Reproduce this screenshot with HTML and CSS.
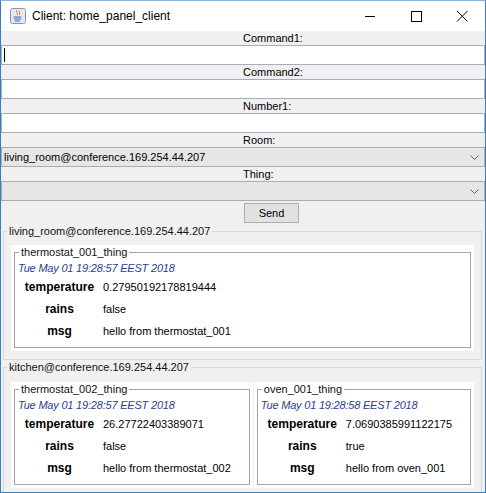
FILE: index.html
```html
<!DOCTYPE html>
<html>
<head>
  <meta charset="UTF-8">
  <link rel="stylesheet" href="styles.css">
  <title>Client: home_panel_client</title>
</head>
<body>
<div class="window">
  <div class="titlebar">
    <svg class="app-icon" width="16" height="16" viewBox="0 0 16 16">
      <rect x="0.5" y="0.5" width="15" height="15" rx="2" fill="#e4e8ee" stroke="#8c96a3"/>
      <path d="M7 2 C5 4 9 5 7 7 M9.5 3 C8 4.5 11 5 9.5 7" fill="none" stroke="#e07a1f" stroke-width="1"/>
      <path d="M3.5 9 H11.5 M4 11 H11 M5 13 H10" stroke="#3a6fb5" stroke-width="1"/>
    </svg>
    <div class="title">Client: home_panel_client</div>
    <div class="controls">
      <div class="ctl"><svg width="12" height="12" viewBox="0 0 12 12"><path d="M1 6.5 H11" stroke="#000"/></svg></div>
      <div class="ctl"><svg width="12" height="12" viewBox="0 0 12 12"><rect x="1.5" y="1.5" width="10" height="10" fill="none" stroke="#000"/></svg></div>
      <div class="ctl"><svg width="12" height="12" viewBox="0 0 12 12"><path d="M1 1 L11.5 11.5 M11.5 1 L1 11.5" stroke="#000"/></svg></div>
    </div>
  </div>

  <div class="content">
    <div class="label">Command1:</div>
    <div class="field"><span class="caret"></span></div>
    <div class="label">Command2:</div>
    <div class="field"></div>
    <div class="label">Number1:</div>
    <div class="field"></div>
    <div class="label">Room:</div>
    <div class="combo">
      <span>living_room@conference.169.254.44.207</span>
      <svg class="arrow" width="9" height="5" viewBox="0 0 9 5"><path d="M0.5 0.5 L4.5 4.5 L8.5 0.5" fill="none" stroke="#606060"/></svg>
    </div>
    <div class="label">Thing:</div>
    <div class="combo">
      <span></span>
      <svg class="arrow" width="9" height="5" viewBox="0 0 9 5"><path d="M0.5 0.5 L4.5 4.5 L8.5 0.5" fill="none" stroke="#606060"/></svg>
    </div>
    <div class="send-row"><button class="send">Send</button></div>

    <fieldset class="room">
      <legend>living_room@conference.169.254.44.207</legend>
      <div class="things">
        <div class="thing-wrap">
          <fieldset class="thing">
            <legend>thermostat_001_thing</legend>
            <div class="date">Tue May 01 19:28:57 EEST 2018</div>
            <div class="props">
              <div class="k">temperature</div><div class="v">0.27950192178819444</div>
              <div class="k">rains</div><div class="v">false</div>
              <div class="k">msg</div><div class="v">hello from thermostat_001</div>
            </div>
          </fieldset>
        </div>
      </div>
    </fieldset>

    <fieldset class="room last">
      <legend>kitchen@conference.169.254.44.207</legend>
      <div class="things">
        <div class="thing-wrap">
          <fieldset class="thing">
            <legend>thermostat_002_thing</legend>
            <div class="date">Tue May 01 19:28:57 EEST 2018</div>
            <div class="props">
              <div class="k">temperature</div><div class="v">26.27722403389071</div>
              <div class="k">rains</div><div class="v">false</div>
              <div class="k">msg</div><div class="v">hello from thermostat_002</div>
            </div>
          </fieldset>
        </div>
        <div class="thing-wrap">
          <fieldset class="thing">
            <legend>oven_001_thing</legend>
            <div class="date">Tue May 01 19:28:58 EEST 2018</div>
            <div class="props">
              <div class="k">temperature</div><div class="v">7.0690385991122175</div>
              <div class="k">rains</div><div class="v">true</div>
              <div class="k">msg</div><div class="v">hello from oven_001</div>
            </div>
          </fieldset>
        </div>
      </div>
    </fieldset>
  </div>
</div>
</body>
</html>
```

FILE: styles.css
```css
html, body {
  margin: 0;
  padding: 0;
}

body {
  font-family: "Liberation Sans", Arial, sans-serif;
  font-size: 11px;
  color: #000;
  background: #fff;
}

.window {
  width: 486px;
  height: 493px;
  box-sizing: border-box;
  border: 1px solid #3b7ec0;
  border-top-color: #8fb4d9;
  background: #f0f0f0;
  display: flex;
  flex-direction: column;
  overflow: hidden;
}

/* title bar */
.titlebar {
  height: 30px;
  background: #fff;
  display: flex;
  align-items: center;
  flex: none;
}
.app-icon {
  margin-left: 9px;
  margin-top: -1px;
}
.title {
  margin-left: 6px;
  font-size: 12px;
  flex: 1;
  margin-top: -1px;
}
.controls {
  display: flex;
  height: 30px;
}
.ctl {
  width: 46px;
  display: flex;
  align-items: center;
  justify-content: center;
}
.ctl svg {
  margin-top: -1px;
}

/* form part */
.content {
  flex: 1;
  display: flex;
  flex-direction: column;
}
.label {
  height: 14px;
  line-height: 14px;
  padding-left: 50%;
  white-space: nowrap;
}
.field {
  height: 20px;
  box-sizing: border-box;
  background: #fff;
  border: 1px solid #a3afbd;
  position: relative;
}
.caret {
  position: absolute;
  left: 2px;
  top: 2px;
  width: 1px;
  height: 14px;
  background: #000;
}
.combo {
  height: 20px;
  box-sizing: border-box;
  background: #e6e6e6;
  border: 1px solid #adadad;
  display: flex;
  align-items: center;
  padding-left: 2px;
}
.combo span {
  flex: 1;
  margin-top: -1px;
}
.combo .arrow {
  margin-right: 5px;
}
.send-row {
  height: 23px;
  padding-left: 50%;
  padding-top: 2px;
  box-sizing: border-box;
}
.send {
  margin-left: 1px;
  width: 55px;
  height: 20px;
  padding: 0;
  font-family: "Liberation Sans", Arial, sans-serif;
  font-size: 11px;
  background: #e1e1e1;
  border: 1px solid #adadad;
  color: #000;
}

/* room panels */
fieldset.room {
  margin: 0 3px 0 2px;
  padding: 0 7px 8px 7px;
  border: 1px solid #d5d9dd;
  min-width: 0;
}
fieldset.room legend {
  padding: 0 2px;
  margin-left: -4px;
  line-height: 14px;
  color: #111;
}
fieldset.room.last {
  margin-top: 0;
  flex: 1;
  padding-top: 8px;
}
.room:first-of-type .things {
  margin-top: 7px;
}
.things {
  display: flex;
  gap: 1px;
}
.thing-wrap {
  flex: 1 1 auto;
  background: #fff;
  padding: 0 3px 3px 3px;
}
fieldset.thing {
  margin: 0;
  padding: 0 3px 5px 3px;
  border: 1px solid #a5a5a5;
  min-width: 0;
}
fieldset.thing legend {
  padding: 0 2px;
  margin-left: 1px;
  line-height: 14px;
  color: #111;
}
.date {
  font-style: italic;
  color: #2c3e8f;
  line-height: 16px;
  height: 17px;
  padding-top: 1px;
  box-sizing: border-box;
  letter-spacing: -0.2px;
}
.props {
  display: grid;
  grid-template-columns: 83px auto;
  column-gap: 2px;
}
.props .k {
  font-weight: bold;
  font-size: 12px;
  text-align: center;
  line-height: 22px;
}
.props .v {
  line-height: 22px;
  white-space: nowrap;
}
```
